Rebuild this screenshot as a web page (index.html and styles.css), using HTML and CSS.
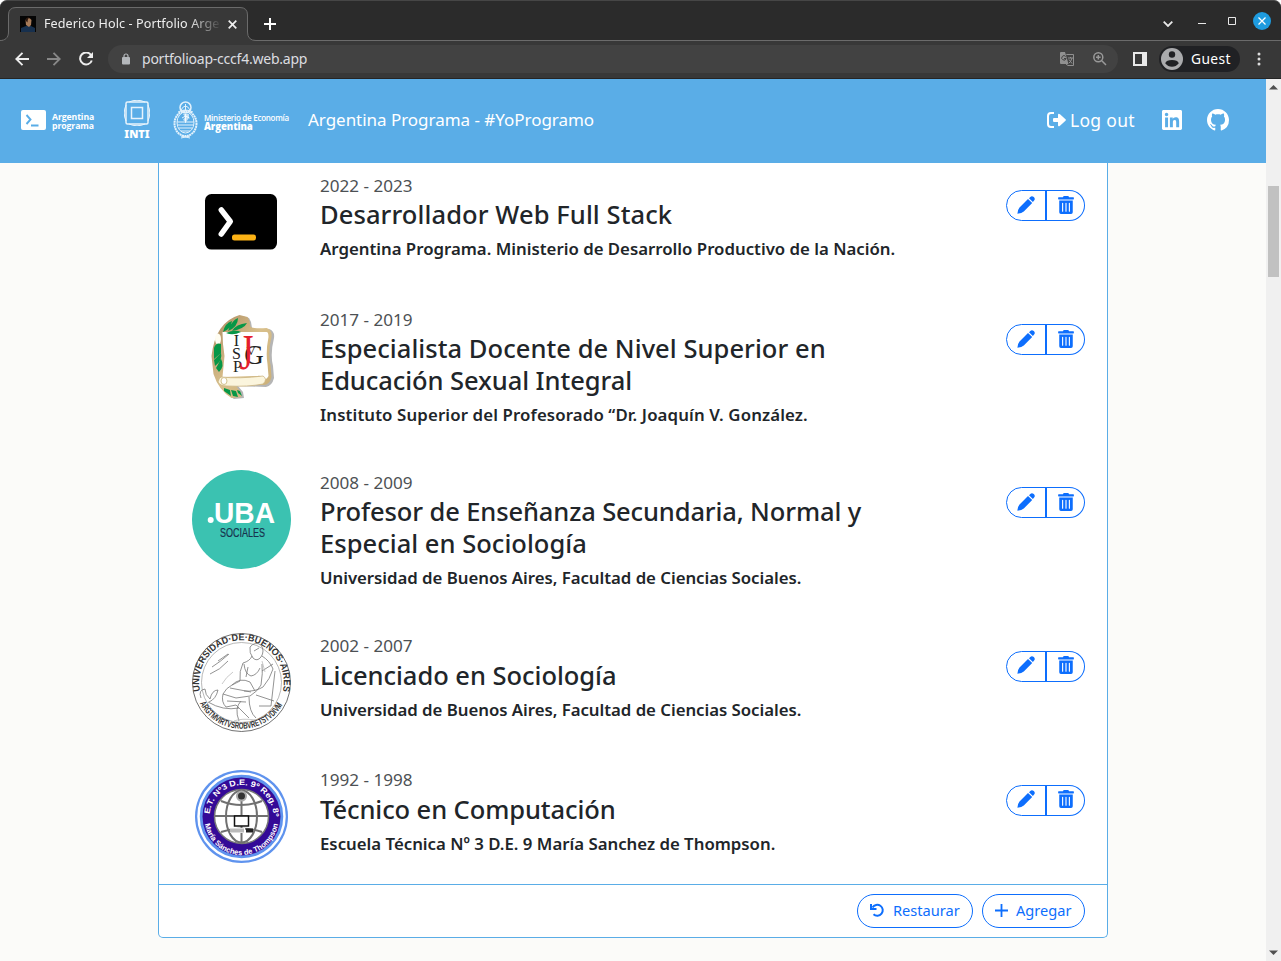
FILE: index.html
```html
<!DOCTYPE html>
<html lang="es">
<head>
<meta charset="utf-8">
<title>Federico Holc - Portfolio Argentina Programa</title>
<link rel="stylesheet" href="styles.css">
</head>
<body>
<svg class="defs" width="0" height="0">
  <symbol id="pen" viewBox="0 0 18 18"><path d="M11 2.900l4.200 4.200L6.800 15.500Q4.800 17.200 .4 17.700 .8 13.300 2.500 11.400zM12 2.200l1.300-1.300q1.700-1.500 3.500.2t.3 3.500l-1.200 1.400z"/></symbol>
  <symbol id="trash" viewBox="0 0 448 512"><path d="M32 464a48 48 0 0 0 48 48h288a48 48 0 0 0 48-48V128H32zm272-256a16 16 0 0 1 32 0v224a16 16 0 0 1-32 0zm-96 0a16 16 0 0 1 32 0v224a16 16 0 0 1-32 0zm-96 0a16 16 0 0 1 32 0v224a16 16 0 0 1-32 0zM432 32H312l-9.4-18.7A24 24 0 0 0 281.1 0H166.8a23.72 23.72 0 0 0-21.4 13.3L136 32H16A16 16 0 0 0 0 48v32a16 16 0 0 0 16 16h416a16 16 0 0 0 16-16V48a16 16 0 0 0-16-16z"/></symbol>
</svg>
<div class="window">
  <div class="tabbar">
    <svg class="tab-shape" width="256" height="41" viewBox="0 0 256 41"><path d="M0 41V40.5C5 40.5 8.500 38 8.500 32V15Q8.500 7.500 16 7.500H240Q247.500 7.500 247.500 15V32Q247.500 40.500 256 40.500V41Z" fill="#383838"/><path d="M0 40.500C5 40.500 8.500 38 8.500 32V15Q8.500 7.500 16 7.500H240Q247.500 7.500 247.500 15V32Q247.500 40.500 256 40.500" fill="none" stroke="#6b6b6b"/></svg>
    <div class="tab">
      <svg width="16" height="16" viewBox="0 0 16 16"><path fill="#050505" d="M0 0h16v16H0z"/><path fill="#17304e" d="M1 16v-4l5-2h5l4 2v4z"/><path fill="#a77b59" d="M5.500 4q3-4 6 0l-.5 5L9 11 6 9z"/><path fill="#2a1810" d="M5.500 4.500q1-4 4-3-2 1-2 5z"/></svg>
      <span class="tab-title">Federico Holc - Portfolio Arge</span>
      <svg class="tab-close" width="9" height="9" viewBox="0 0 9 9"><path d="M.7.7l7.600 7.600M8.300.7L.7 8.300" stroke="#eee" stroke-width="1.700"/></svg>
    </div>
    <svg class="newtab" width="12" height="12" viewBox="0 0 12 12"><path d="M6 0v12M0 6h12" stroke="#fff" stroke-width="2"/></svg>
    <div class="winctl">
      <svg width="10" height="6" viewBox="0 0 10 6"><path d="M.7.7L5 5 9.300.7" fill="none" stroke="#e8e8e8" stroke-width="1.800"/></svg>
      <svg width="8" height="8" viewBox="0 0 8 8"><path d="M0 6.500h8" stroke="#e8e8e8"/></svg>
      <svg width="8" height="8" viewBox="0 0 8 8"><path d="M.5.5h7v7h-7z" fill="none" stroke="#e8e8e8"/></svg>
      <svg width="18" height="18" viewBox="0 0 18 18"><circle cx="9" cy="9" r="9" fill="#1e9bdf"/><path d="M5.500 5.500l7 7m0-7l-7 7" stroke="#fff" stroke-width="1.300"/></svg>
    </div>
  </div>
  <div class="toolbar">
    <svg width="14" height="14" viewBox="0 0 14 14"><path d="M14 7H1.500M7.500.8L1.300 7l6.200 6.200" fill="none" stroke="#eee" stroke-width="1.900"/></svg>
    <svg class="forward" width="14" height="14" viewBox="0 0 14 14"><path d="M0 7h12.500M6.500.8L12.700 7l-6.200 6.200" fill="none" stroke="#888" stroke-width="1.900"/></svg>
    <svg class="reload" width="14" height="14" viewBox="0 0 14 14"><path d="M12 3A6 6 0 1 0 12.800 8.500" fill="none" stroke="#eee" stroke-width="2"/><path d="M14 0v6H8z" fill="#eee"/></svg>
    <div class="omnibox">
      <svg width="8" height="12" viewBox="0 0 8 12"><rect y="4" width="8" height="7.500" rx="1" fill="#b4b7bb"/><path d="M2 5V3a2 2 0 0 1 4 0v2" fill="none" stroke="#b4b7bb" stroke-width="1.200"/></svg>
      <span class="url">portfolioap-cccf4.web.app</span>
      <svg class="translate" width="15" height="15" viewBox="0 0 15 15"><path d="M0 1q0-1 1-1h4l3.500 12H1q-1 0-1-1z" fill="#909090"/><path d="M6.300 2.500h7.200v11H8L6 12" fill="none" stroke="#909090"/><path d="M5.700 4.500a2.200 2.200 0 1 0 .4 2H4" fill="none" stroke="#404040"/><path d="M8 6h5M10.500 5v1m1.500 0q-1 4-3 5M9 7.500l3 4" fill="none" stroke="#909090"/></svg>
      <svg class="magnify" width="14" height="14" viewBox="0 0 14 14"><circle cx="5.300" cy="5.300" r="4.500" fill="none" stroke="#999" stroke-width="1.500"/><path d="M8.800 8.800l4.200 4.200M3 5.300h4.600M5.300 3v4.600" stroke="#999" stroke-width="1.500"/></svg>
    </div>
    <svg class="panel" width="14" height="14" viewBox="0 0 14 14"><path fill="#e9e9e9" fill-rule="evenodd" d="M0 0h14v14H0zM2 2v10h7V2z"/></svg>
    <div class="guest">
      <svg width="22" height="22" viewBox="0 0 22 22"><circle cx="11" cy="11" r="11" fill="#aaabad"/><circle cx="11" cy="6.500" r="3.200" fill="#202124"/><path d="M4.200 15.200Q5.500 12 11 12t6.800 3.200Q15 18.800 11 18.800t-6.800-3.600z" fill="#202124"/></svg>
      <span>Guest</span>
    </div>
    <svg class="dots" width="4" height="14" viewBox="0 0 4 14"><g fill="#ddd"><circle cx="2" cy="2" r="1.500"/><circle cx="2" cy="7" r="1.500"/><circle cx="2" cy="12" r="1.500"/></g></svg>
  </div>
  <div class="viewport">
    <div class="page">
      <header class="navbar">
        <svg class="brand-ap" width="25" height="20" viewBox="0 0 25 20"><rect width="25" height="20" rx="2" fill="#fff"/><path d="M5.500 5l4 4.500-4 4.500M10 15.500h7.500" fill="none" stroke="#5aade7" stroke-width="1.900"/></svg>
        <div class="brand-text ap-text">Argentina<br>programa</div>
        <div class="inti"><svg width="26" height="26" viewBox="0 0 26 26"><g fill="none" stroke="#e7f3fc"><rect x="2" y="2" width="22" height="22" rx="1.500" stroke-width="1.500"/><rect x="7.500" y="7.500" width="11" height="11" stroke-width="1.500"/><path d="M5 2Q13-1.500 21 2M5 24q8 3.500 16 0M2 5q-3.500 8 0 16M24 5q3.500 8 0 16"/></g></svg><b>INTI</b></div>
        <svg class="crest" width="25" height="38" viewBox="0 0 25 38"><g fill="none" stroke="#e3f2fc" stroke-width="1"><ellipse cx="12.500" cy="22.500" rx="11" ry="12.500" stroke-width="2" stroke-dasharray="2 .5"/><ellipse cx="12.500" cy="21.500" rx="8.500" ry="10.500"/><path d="M4 21h17M5 24h15M6 27h13M8 30h9M12.500 13v9M9 17l3.500-2 4 2M8 35l9 2M17 35l-9 2"/><circle cx="12.500" cy="6.500" r="5.500" stroke-width="1.500"/><path d="M8 9q4.500-8 9 0M12.500 3v7M5 11q7-4 15 0"/></g><path d="M10 13h6v4l-3 4-3-2 2-3z" fill="#fff" opacity=".65"/></svg>
        <div class="brand-text min-text"><span>Ministerio de Economía</span><br><b>Argentina</b></div>
        <span class="nav-title">Argentina Programa - #YoProgramo</span>
        <svg class="logout" width="19" height="16" viewBox="0 0 19 16"><path d="M7 1H4Q1 1 1 4v8q0 3 3 3h3" fill="none" stroke="#fff" stroke-width="2"/><path d="M6 7q0-1 1-1h4V3q0-2 2-.7l5.500 5q.8.700 0 1.400l-5.500 5q-2 1.300-2-.7v-3H7q-1 0-1-1z" fill="#fff"/></svg>
        <span class="logout-text">Log out</span>
        <svg class="linkedin" width="20" height="20" viewBox="0 32 448 448"><path fill="#fff" d="M416 32H31.900C14.300 32 0 46.500 0 64.300v383.400C0 465.500 14.300 480 31.900 480H416c17.600 0 32-14.500 32-32.300V64.300c0-17.800-14.400-32.300-32-32.300zM135.400 416H69V202.200h66.500V416zm-33.200-243c-21.300 0-38.500-17.300-38.500-38.500S80.900 96 102.200 96c21.200 0 38.500 17.300 38.500 38.500 0 21.300-17.200 38.500-38.500 38.500zm282.100 243h-66.400V312c0-24.800-.5-56.700-34.500-56.700-34.600 0-39.900 27-39.900 54.900V416h-66.400V202.200h63.700v29.200h.9c8.900-16.800 30.600-34.500 62.900-34.500 67.200 0 79.700 44.300 79.700 101.900V416z"/></svg>
        <svg class="github" width="22" height="22" viewBox="0 0 16 16"><path fill="#fff" d="M8 0C3.580 0 0 3.580 0 8c0 3.540 2.290 6.530 5.470 7.590.4.070.55-.17.55-.38 0-.19-.01-.82-.01-1.490-2.010.370-2.530-.49-2.690-.94-.09-.23-.48-.94-.82-1.130-.28-.15-.68-.52-.01-.53.630-.01 1.080.580 1.230.820.720 1.210 1.870.870 2.330.660.070-.52.280-.87.510-1.070-1.780-.2-3.640-.89-3.640-3.950 0-.87.310-1.590.820-2.150-.08-.2-.36-1.020.080-2.120 0 0 .670-.21 2.200.820.640-.18 1.320-.27 2-.27.680 0 1.360.090 2 .270 1.530-1.040 2.200-.82 2.200-.82.440 1.100.160 1.920.080 2.120.510.560.820 1.270.820 2.150 0 3.070-1.870 3.750-3.650 3.950.290.250.540.730.540 1.480 0 1.070-.01 1.930-.01 2.200 0 .210.150.460.550.380A8.012 8.012 0 0 0 16 8c0-4.420-3.580-8-8-8z"/></svg>
      </header>
      <main class="card">
        <div class="entries">
          <article class="entry">
            <svg class="logo" viewBox="0 0 99 99"><rect x="13" y="21" width="72" height="55.600" rx="6.500"/><path d="M29.300 37l9 11.500-9 12.500" fill="none" stroke="#fff" stroke-width="5.500" stroke-linecap="round" stroke-linejoin="round"/><rect x="40" y="61.500" width="24" height="6" rx="2.500" fill="#fcb215"/></svg>
            <div class="info"><div class="date">2022 - 2023</div><h3><span class="t1">Desarrollador Web Full Stack</span></h3><p class="s1">Argentina Programa. Ministerio de Desarrollo Productivo de la Nación.</p></div>
            <div class="actions"><button><svg width="18" height="18"><use href="#pen"/></svg></button><button><svg width="16" height="18"><use href="#trash"/></svg></button></div>
          </article>
          <article class="entry">
            <svg class="logo" viewBox="0 0 99 99">
              <defs><linearGradient id="gold" x1="0" x2="1" y1="0" y2="1"><stop offset="0" stop-color="#a9875e"/><stop offset=".5" stop-color="#d9c08c"/><stop offset="1" stop-color="#c9ad74"/></linearGradient></defs>
              <path d="M21 50Q24 16 49 9l7 2 2 4 1 6q5 2 17 1 6 2 5 9-4 16-1 28l1 12q-2 8-8 9l-28-1 5 6 1 6-10 1Q27 84 23 68z" fill="#b5b5b5" transform="translate(1 0)"/>
              <path d="M20 50Q24 16 48 9l8 2 2 4 1 6q5 2 16 1 6 2 5 9-4 16-1 28l1 12q-2 8-8 8H44l5 7 1 5-10 1Q27 84 22 68z" fill="url(#gold)" transform="translate(-.5 -1)"/>
              <path d="M31 26h44q2 0 2 5-3 15-1 27l1 12q-2 4-6 4-1-5-5-4l-35 1 2-21q-2-12-2-24z" fill="#fff" transform="translate(-.5 -1)"/>
              <path d="M29 70q18 2 42-1 5 3 0 8-15 3-36 2-7 0-9-4 1-4 3-5z" fill="#fbf5dd" stroke="#cbb583" stroke-width=".8"/><ellipse cx="32" cy="74" rx="3" ry="3.500" fill="#fff" stroke="#d3c28f"/>
              <ellipse cx="26" cy="32" rx="3" ry="5.500" fill="#fffdf2"/>
              <g fill="#079747"><path d="M31 25q2-9 9-11-1 8-9 11zM36 24q4-11 10-13 0 9-10 13zM40 24q4-7 15-8-3 6-15 8zM34 26q9-4 15-1-8 4-15 1zM22 41q2-6 7-4v9l-7 6zM22 53l7-7q2 7-6 13zM24 61l5-9q4 7-2 13zM32 81l6 2 1 6-7-5zM39 83l5 1 2 6-5-1zM45 83l3 1 2 5-4-3z"/></g>
              <g font-family="Liberation Serif" text-anchor="middle" fill="#222"><text x="44.500" y="39" font-size="16">I</text><text x="44.500" y="52" font-size="16">S</text><text x="45.500" y="65" font-size="16">P</text><text x="62" y="57" font-size="27">G</text><text x="59" y="48" font-size="13">V</text><text x="54.500" y="62" font-size="50" textLength="14" lengthAdjust="spacingAndGlyphs" fill="#e5202c">J</text></g>
            </svg>
            <div class="info"><div class="date">2017 - 2019</div><h3><span class="t2">Especialista Docente de Nivel Superior en</span><br><span class="t3">Educación Sexual Integral</span></h3><p class="s2">Instituto Superior del Profesorado “Dr. Joaquín V. González.</p></div>
            <div class="actions"><button><svg width="18" height="18"><use href="#pen"/></svg></button><button><svg width="16" height="18"><use href="#trash"/></svg></button></div>
          </article>
          <article class="entry">
            <svg class="logo" viewBox="0 0 99 99"><circle cx="49.500" cy="49.500" r="49.500" fill="#3bc2b1"/><circle cx="18.700" cy="50" r="3" fill="#fff"/><g font-family="Liberation Sans"><text x="22" y="52.800" font-size="29" font-weight="bold" fill="#fff" textLength="61" lengthAdjust="spacingAndGlyphs">UBA</text><text x="28" y="67" font-size="12" fill="#18324d" stroke="#18324d" stroke-width=".2" textLength="45" lengthAdjust="spacingAndGlyphs">SOCIALES</text></g></svg>
            <div class="info"><div class="date">2008 - 2009</div><h3><span class="t4">Profesor de Enseñanza Secundaria, Normal y</span><br><span class="t5">Especial en Sociología</span></h3><p class="s3">Universidad de Buenos Aires, Facultad de Ciencias Sociales.</p></div>
            <div class="actions"><button><svg width="18" height="18"><use href="#pen"/></svg></button><button><svg width="16" height="18"><use href="#trash"/></svg></button></div>
          </article>
          <article class="entry">
            <svg class="logo" viewBox="0 0 99 99">
              <defs><path id="sealTop" d="M8.500 60A42.300 42.300 0 1 1 90.500 60"/><path id="sealBottom" d="M4 60A46.800 46.800 0 0 0 95 60"/></defs>
              <g fill="none" stroke="#333" stroke-width=".7"><circle cx="49.500" cy="49.500" r="49"/><circle cx="49.500" cy="49.500" r="40" stroke="#999"/></g>
              <g font-family="Liberation Sans" font-weight="bold" font-size="9.500" fill="#333"><text><textPath href="#sealTop" startOffset="2" textLength="150" lengthAdjust="spacingAndGlyphs">UNIVERSIDAD·DE·BUENOS·AIRES</textPath></text><text font-size="9"><textPath href="#sealBottom" startOffset="11" textLength="101" lengthAdjust="spacingAndGlyphs">ARGTMVIRTVSROBVRETSTVDIVM</textPath></text></g>
              <g fill="none" stroke="#777" stroke-width=".8"><path d="M58 14q5-6 11-2 4 6 0 12-4 5-8 1-4-5-3-11zM60 23q-2 5-9 7-4 8-3 18l-8 4q-6 3-9 9l13 4 14-2q8-5 11-11 2-12 1-21M70 23q8 5 11 13-3 10-10 18-8 5-19 4M52 31q1 10 7 12 6-1 9-8M40 52q8-8 18-3l5 9M31 61q-2 8 3 13l10-2 13 13M49 68q-7 7-2 20M57 64q0 15 7 21M20 34q8-5 17-13M18 41q10-4 18-13M26 28l10-7M83 38l-4 35H67M9 65q-3-8 4-9 0 6 5 10 2-9 8-9-2 9-9 12M16 69q15 9 31 6M64 62l18 6M70 38l11-7M56 34l-2 10M62 18l5-3M38 55l21 4M35 68l19 1"/><path d="M30 51q4-7 11-12M42 88q7-3 22-1M70 28l3 11" stroke="#bbb"/></g>
            </svg>
            <div class="info"><div class="date">2002 - 2007</div><h3><span class="t6">Licenciado en Sociología</span></h3><p class="s3">Universidad de Buenos Aires, Facultad de Ciencias Sociales.</p></div>
            <div class="actions"><button><svg width="18" height="18"><use href="#pen"/></svg></button><button><svg width="16" height="18"><use href="#trash"/></svg></button></div>
          </article>
          <article class="entry last">
            <svg class="logo" viewBox="0 0 99 99">
              <defs><path id="etTop" d="M18.500 58A32 32 0 1 1 80.500 58"/><path id="etBottom" d="M12.500 51A37 37 0 0 0 86.500 51"/></defs>
              <circle cx="49.500" cy="49.500" r="46.500" fill="#5f93ee"/><circle cx="49.500" cy="49.500" r="43" fill="none" stroke="#fff" stroke-width="2.500"/><circle cx="49.500" cy="49.500" r="39" fill="#340a97"/>
              <circle cx="49.500" cy="49.500" r="27" fill="#fff" stroke="#777" stroke-width="1.500"/>
              <g fill="none" stroke="#707070" stroke-width="2"><path d="M23 49h53M29 34q20 8 41 0M29 65q20-7 41 0M49.500 23v53"/><ellipse cx="49.500" cy="49.500" rx="15.500" ry="26"/></g>
              <circle cx="49.500" cy="29" r="4.500" fill="#333" stroke="#aaa" stroke-width="2"/><rect x="42.500" y="49" width="14" height="10" fill="#fff" stroke="#111" stroke-width="1.500"/><path fill="#fff" d="M38 61h15v5H38z"/><path d="M39 61.500v4m2-4v4m2-4v4m2-4v4m2-4v4m2-4v4m2-4v4" stroke="#777"/><path fill="#222" d="M54 61.500h7v4h-7z"/>
              <g fill="#fff" font-family="Liberation Sans" font-weight="bold"><text font-size="8"><textPath href="#etTop" textLength="97" lengthAdjust="spacingAndGlyphs" startOffset="11">E.T. Nº3 D.E. 9º Reg. 8º</textPath></text><text font-size="7.500"><textPath href="#etBottom" startOffset="6" textLength="104" lengthAdjust="spacingAndGlyphs">María Sánches de Thompson</textPath></text></g>
            </svg>
            <div class="info"><div class="date">1992 - 1998</div><h3><span class="t7">Técnico en Computación</span></h3><p class="s4">Escuela Técnica Nº 3 D.E. 9 María Sanchez de Thompson.</p></div>
            <div class="actions"><button><svg width="18" height="18"><use href="#pen"/></svg></button><button><svg width="16" height="18"><use href="#trash"/></svg></button></div>
          </article>
        </div>
        <footer class="card-footer">
          <button class="pill restore"><svg width="15" height="15" viewBox="0 0 15 15"><path d="M2.500 4.500A5.500 5.500 0 1 1 3.500 11.300" fill="none" stroke="#0d6efd" stroke-width="2"/><path d="M1 1V6h5.500" fill="none" stroke="#0d6efd" stroke-width="2"/></svg><span>Restaurar</span></button>
          <button class="pill add"><svg width="13" height="13" viewBox="0 0 13 13"><path d="M6.500 0v13M0 6.500h13" stroke="#0d6efd" stroke-width="1.800"/></svg><span>Agregar</span></button>
        </footer>
      </main>
    </div>
    <div class="scrollbar">
      <svg width="9" height="5" viewBox="0 0 9 5"><path d="M4.500 0L9 4.500H0z" fill="#505050"/></svg>
      <div class="thumb"></div>
      <svg width="9" height="5" viewBox="0 0 9 5"><path d="M4.500 5L0 .5h9z" fill="#505050"/></svg>
    </div>
  </div>
</div>
</body>
</html>
```
FILE: styles.css
```css
* { box-sizing: border-box; }
body { margin: 0; font-family: "Noto Sans", "Open Sans", sans-serif; color: #212529; overflow: hidden; }
svg { display: block; flex: none; }
button { font: inherit; background: #fff; color: #0d6efd; margin: 0; padding: 0; }
span { white-space: nowrap; }
.defs { position: absolute; }
.window { width: 1281px; height: 961px; display: flex; flex-direction: column; }

.tabbar { height: 41px; background: #2b2b2b; border-top: 1px solid #464646; border-bottom: 1px solid #6b6b6b; display: flex; align-items: center; position: relative; border-radius: 7px 7px 0 0; }
.tab-shape { position: absolute; left: 0; top: -1px; }
.tab { width: 248px; padding: 7px 0 0 20px; display: flex; align-items: center; position: relative; }
.tab-title { width: 176px; margin-left: 8px; color: #eee; font-size: 12.6px; line-height: 20px; letter-spacing: .08px; -webkit-mask-image: linear-gradient(90deg, #000 145px, transparent 178px); mask-image: linear-gradient(90deg, #000 145px, transparent 178px); }
.tab-close { margin-left: 7.500px; }
.newtab { margin: 7px 0 0 16px; }
.winctl { margin-left: auto; padding-right: 10px; display: flex; align-items: center; }
.winctl svg:nth-child(1) { margin: 6px 25px 0 0; }
.winctl svg:nth-child(2) { margin-right: 22px; }
.winctl svg:nth-child(3) { margin-right: 17px; }

.toolbar { height: 38px; background: #383838; border-bottom: 1px solid #252525; display: flex; align-items: center; padding: 0 0 1px 15px; }
.forward { margin-left: 18px; }
.reload { margin-left: 18px; }
.omnibox { margin-left: 15px; width: 1010px; height: 28px; border-radius: 14px; background: #424242; display: flex; align-items: center; padding-left: 14px; }
.url { margin-left: 12px; padding-bottom: 1px; color: #dcdde0; font-size: 14px; letter-spacing: -.23px; }
.translate { margin-left: auto; }
.magnify { margin: 0 11px 0 18px; }
.panel { margin-left: 15px; }
.guest { margin-left: 12px; width: 81px; height: 26px; border-radius: 13px; background: #202124; color: #fff; display: flex; align-items: center; padding-left: 2px; font-size: 13.8px; }
.guest span { margin-left: 8px; padding-bottom: 1px; letter-spacing: .4px; }
.dots { margin-left: 17px; }

.viewport { height: 882px; display: flex; }
.page { width: 1266px; background: #fbfbf9; }
.navbar { height: 84px; background: #5aade7; color: #fff; display: flex; align-items: center; padding: 0 37px 3px 21px; }
.brand-text { color: #fff; font-family: "Open Sans", "Noto Sans", sans-serif; font-size: 8.700px; line-height: 9px; }
.ap-text { margin: 5px 0 0 6px; width: 43px; font-weight: 700; letter-spacing: -.1px; }
.inti { margin-left: 29px; width: 26px; text-align: center; }
.inti svg { margin-bottom: 2px; }
.inti b { display: block; font-size: 11px; line-height: 11px; font-weight: 900; }
.crest { margin-left: 23px; }
.min-text { margin: 4px 0 0 6px; width: 86px; font-size: 8px; font-weight: 600; letter-spacing: -.26px; }
.min-text b { font-size: 9.600px; letter-spacing: -.1px; }
.nav-title { margin-left: 18px; font-size: 17px; letter-spacing: -.03px; }
.logout { margin-left: auto; }
.logout-text { margin-left: 4px; width: 65px; font-size: 17.500px; letter-spacing: .3px; }
.linkedin { margin-left: 27px; }
.github { margin-left: 25px; margin-right: 0; }

.card { width: 950px; height: 775px; margin-left: 158px; background: #fff; border: 1px solid #5aade7; border-top: 0; border-radius: 0 0 5px 5px; }
.entries { height: 721px; padding: 9.500px 22px 0 33px; overflow: hidden; }
.entry { display: flex; align-items: flex-start; min-height: 134.200px; padding-bottom: 44.300px; }
.last { min-height: 0; padding-bottom: 0; }
.logo { width: 99px; height: 99px; margin: 0 0 -20px; }
.info { margin-left: 29px; width: 686px; }
.date { color: #4d5154; font-size: 17.100px; line-height: 26px; height: 26.500px; }
h3 { margin: 0 0 7.500px; font-size: 25.500px; line-height: 31.700px; font-weight: 500; }
p { margin: 0; padding-bottom: .5px; font-size: 16.800px; line-height: 21px; font-weight: 600; white-space: nowrap; }
.t1 { letter-spacing: .09px; }
.t2 { letter-spacing: .05px; }
.t3 { letter-spacing: -.07px; }
.t4 { letter-spacing: -.12px; }
.t5 { letter-spacing: .03px; }
.t6 { letter-spacing: -.03px; }
.t7 { letter-spacing: -.09px; }
.s1 { letter-spacing: 0; }
.s2 { letter-spacing: .13px; }
.s3 { letter-spacing: -.03px; }
.s4 { letter-spacing: 0; }
.actions { width: 79px; height: 31px; margin-top: 17.500px; display: flex; }
.actions button { width: 40px; height: 31px; border: 1px solid #0d6efd; border-radius: 15.500px 0 0 15.500px; padding: 0 0 2px 10px; color: #0d6efd; fill: currentColor; }
.actions button + button { width: 40px; margin-left: -1px; border-left: 2px solid #0d6efd; border-radius: 0 15.500px 15.500px 0; padding-left: 11px; }
.card-footer { height: 53px; border-top: 1px solid #5aade7; display: flex; justify-content: flex-end; align-items: flex-start; padding: 9px 22px 0 0; gap: 9px; }
.pill { height: 34px; border: 1px solid #0d6efd; border-radius: 17px; display: flex; align-items: center; font-size: 14.600px; padding: 0 0 2px 12px; }
.restore { width: 116px; }
.restore span { margin-left: 8px; }
.add { width: 103px; }
.add span { margin-left: 8px; }

.scrollbar { width: 15px; background: #f0f0f0; display: flex; flex-direction: column; align-items: center; padding: 6px 0; }
.thumb { width: 11px; height: 91px; margin: 96px 0 auto; background: #c1c1c1; }
```
